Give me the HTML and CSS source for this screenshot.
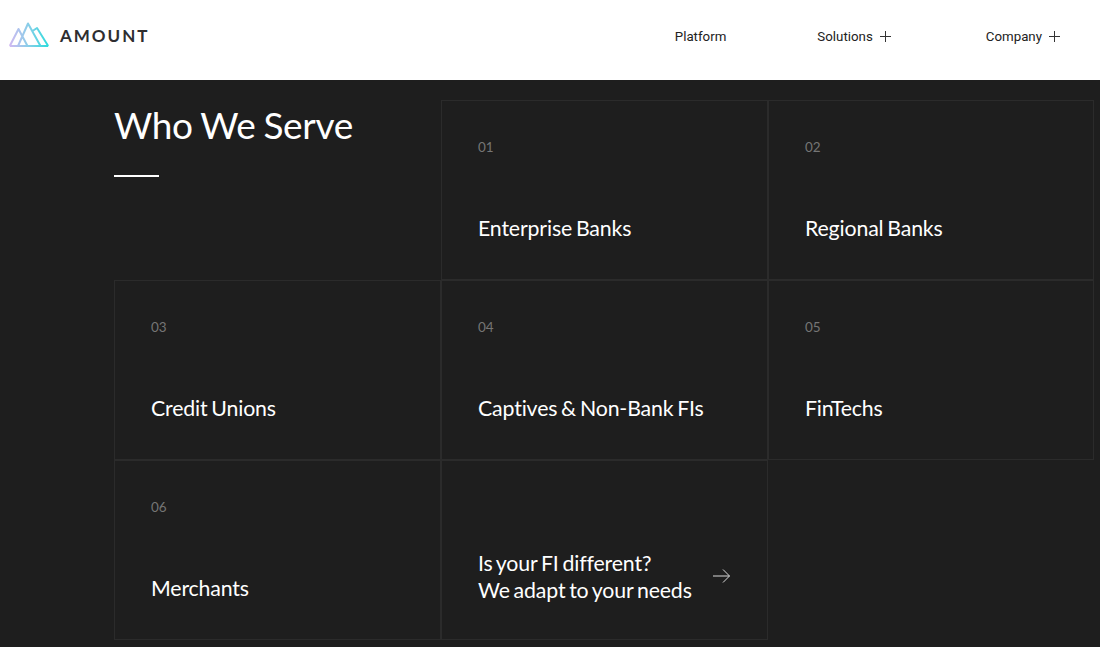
FILE: index.html
```html
<!DOCTYPE html>
<html lang="en">
<head>
<meta charset="utf-8">
<title>Amount - Who We Serve</title>
<link rel="stylesheet" href="styles.css">
</head>
<body>
<header class="header">
  <a class="brand" href="#">
    <svg class="logo" viewBox="0 0 40 26" width="40" height="26" aria-hidden="true">
      <defs>
        <linearGradient id="lg" gradientUnits="userSpaceOnUse" x1="0" y1="0" x2="40" y2="0">
          <stop offset="0" stop-color="#d3b8f2"/>
          <stop offset="0.5" stop-color="#86cfe8"/>
          <stop offset="1" stop-color="#2adcdc"/>
        </linearGradient>
      </defs>
      <path d="M0.8 24 L9.5 7 L18.5 24 M9 24 L19 1.5 L31.5 24 M23.5 9 L28 6 L39.2 24 M0.8 24 H39.2" fill="none" stroke="url(#lg)" stroke-width="2" stroke-linejoin="round"/>
    </svg>
    <span class="wordmark">AMOUNT</span>
  </a>
  <nav class="nav">
    <a class="nav-link nav-platform" href="#">Platform</a>
    <a class="nav-link nav-solutions" href="#">Solutions
      <svg class="plus" viewBox="0 0 11 11" width="11" height="11" aria-hidden="true"><path d="M5.5 0V11M0 5.5H11"/></svg>
    </a>
    <a class="nav-link" href="#">Company
      <svg class="plus" viewBox="0 0 11 11" width="11" height="11" aria-hidden="true"><path d="M5.5 0V11M0 5.5H11"/></svg>
    </a>
  </nav>
</header>
<main class="main">
  <section class="grid">
    <div class="intro">
      <h1 class="title">Who We Serve</h1>
      <div class="rule"></div>
    </div>
    <a class="cell" href="#"><span class="num">01</span><span class="name">Enterprise Banks</span></a>
    <a class="cell" href="#"><span class="num">02</span><span class="name">Regional Banks</span></a>
    <a class="cell" href="#"><span class="num">03</span><span class="name">Credit Unions</span></a>
    <a class="cell" href="#"><span class="num">04</span><span class="name">Captives &amp; Non-Bank FIs</span></a>
    <a class="cell" href="#"><span class="num">05</span><span class="name">FinTechs</span></a>
    <a class="cell" href="#"><span class="num">06</span><span class="name">Merchants</span></a>
    <a class="cell cell-cta" href="#">
      <span class="name cta-text">Is your FI different?<br>We adapt to your needs</span>
      <svg class="arrow" viewBox="0 0 17 14" width="17" height="14" aria-hidden="true"><path d="M0 7H16.5M10 0.5L16.5 7L10 13.5"/></svg>
    </a>
  </section>
</main>
</body>
</html>
```
FILE: styles.css
```css
* { box-sizing: border-box; }
html, body { margin: 0; height: 100%; overflow: hidden; }
body { background: #1e1e1e; font-family: "Lato", "Liberation Sans", sans-serif; }
a { text-decoration: none; color: inherit; }

.header {
  height: 80px;
  background: #fff;
  display: flex;
  align-items: center;
  justify-content: space-between;
  padding: 0 40px 0 9px;
}
.brand { display: flex; align-items: center; gap: 11px; margin-top: -9px; }
.logo { display: block; margin-top: -2px; }
.wordmark {
  font-family: "Lato", sans-serif;
  font-size: 17px;
  font-weight: 700;
  letter-spacing: 2px;
  color: #2e2e30;
}
.nav { display: flex; align-items: center; margin-top: -8px; font-family: "Roboto", sans-serif; }
.nav-link { display: flex; align-items: center; gap: 7px; font-size: 13.3px; color: #222; }
.nav-platform { margin-right: 91px; }
.nav-solutions { margin-right: 95px; }
.plus { fill: none; stroke: #333; stroke-width: 1; }

.main { height: 567px; padding: 20px 0 0 114px; }
.grid {
  display: grid;
  grid-template-columns: 327px 327px 326px;
  grid-template-rows: repeat(3, 180px);
  width: 980px;
}
.intro { padding-top: 2px; }
.title {
  margin: 0;
  font-size: 37px;
  line-height: 46px;
  font-weight: 400;
  color: #fff;
  letter-spacing: -0.35px;
  word-spacing: -1px;
}
.rule { width: 45px; height: 2px; background: #fff; margin-top: 27px; }

.cell {
  border: 1px solid #2b2b2b;
  padding: 38px 36px 0;
  display: flex;
  flex-direction: column;
  color: #fff;
}
.num { font-size: 13.5px; line-height: 16px; color: #757575; }
.name {
  font-size: 21.3px;
  line-height: 27px;
  color: #fff;
  font-weight: 400;
  margin-top: 60px;
  letter-spacing: -0.15px;
  word-spacing: -1.5px;
}
.cell-cta { flex-direction: row; align-items: flex-start; justify-content: space-between; padding-right: 37px; }
.cta-text { margin-top: 51px; }
.arrow { fill: none; stroke: #d8d8d8; stroke-width: 1; margin-top: 70px; flex: none; }
```
